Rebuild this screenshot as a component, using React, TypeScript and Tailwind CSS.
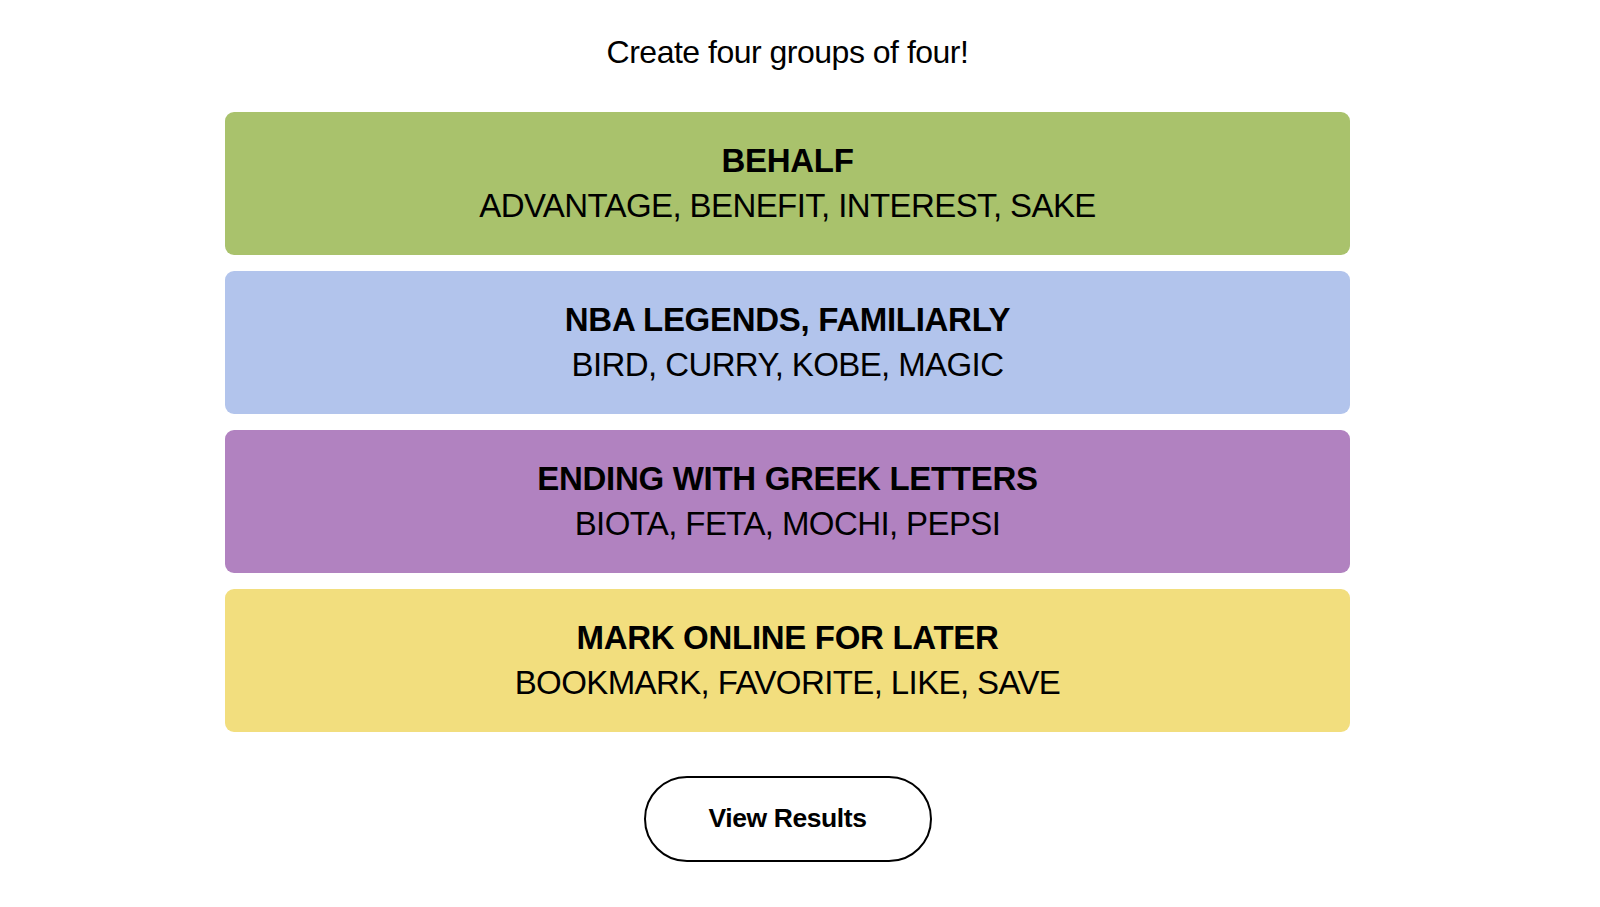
export default function App() {
  const groups = [
    { title: "BEHALF", words: "ADVANTAGE, BENEFIT, INTEREST, SAKE", bg: "bg-[#a9c26c]" },
    { title: "NBA LEGENDS, FAMILIARLY", words: "BIRD, CURRY, KOBE, MAGIC", bg: "bg-[#b2c4ec]" },
    { title: "ENDING WITH GREEK LETTERS", words: "BIOTA, FETA, MOCHI, PEPSI", bg: "bg-[#b182c0]" },
    { title: "MARK ONLINE FOR LATER", words: "BOOKMARK, FAVORITE, LIKE, SAVE", bg: "bg-[#f2de7e]" },
  ];
  return (
    <div className="w-[1600px] h-[907px] bg-white text-black font-['Liberation_Sans',Arial,sans-serif]">
      <div className="ml-[225px] w-[1125px] flex flex-col items-center">
        <div className="mt-[32px] h-[40px] flex items-center text-[32px] tracking-[-0.5px]">Create four groups of four!</div>
        <div className="mt-[40px] w-full flex flex-col gap-[16px]">
          {groups.map((g) => (
            <div key={g.title} className={`${g.bg} h-[143px] rounded-[9px] flex flex-col items-center justify-center pb-[2px]`}>
              <div className="text-[33px] font-bold leading-[45px] tracking-[-0.3px]">{g.title}</div>
              <div className="text-[33px] leading-[45px] tracking-[-0.6px]">{g.words}</div>
            </div>
          ))}
        </div>
        <button className="mt-[44px] w-[288px] h-[86px] rounded-full border-2 border-black bg-white text-[26.5px] font-bold tracking-[-0.4px]">View Results</button>
      </div>
    </div>
  );
}
